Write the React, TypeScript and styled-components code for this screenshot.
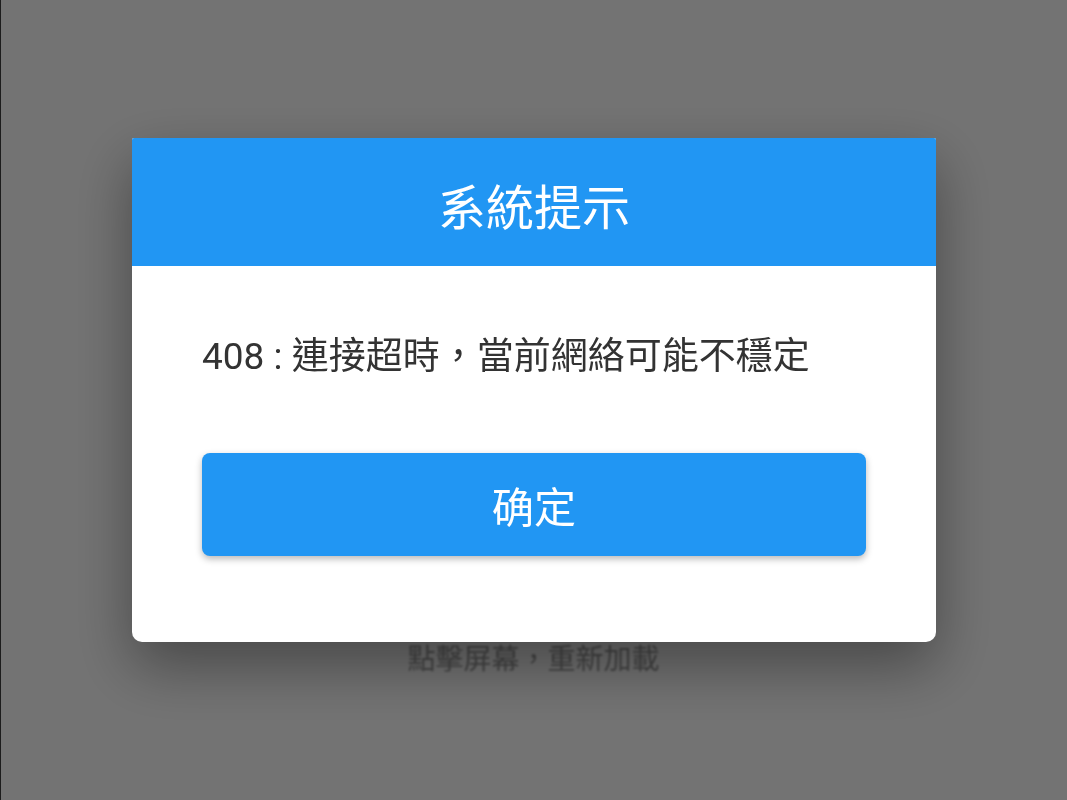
import React from 'react';
import styled, { createGlobalStyle } from 'styled-components';

const GlobalStyle = createGlobalStyle`
  html, body {
    margin: 0;
    padding: 0;
    height: 100%;
    background: #ffffff;
    font-family: Roboto, "Noto Sans CJK TC", "Noto Sans", sans-serif;
  }
  #root {
    height: 100%;
  }
`;

const Page = styled.div`
  height: 800px;
  display: flex;
  flex-direction: column;
  align-items: center;
  padding-top: 642px;
  box-sizing: border-box;
  background: #ffffff;
`;

const ReloadHint = styled.div`
  font-size: 28px;
  line-height: 36px;
  color: #999999;
  filter: blur(1px);
`;

const Overlay = styled.div`
  position: fixed;
  inset: 0;
  background: rgba(0, 0, 0, 0.55);
  border-left: 1px solid #1c1c1c;
  display: flex;
  justify-content: center;
  align-items: flex-start;
  padding-top: 138px;
  box-sizing: border-box;
`;

const Dialog = styled.div`
  width: 804px;
  background: #ffffff;
  border-radius: 2px 2px 10px 10px;
  overflow: hidden;
  box-shadow: 0 24px 60px rgba(0, 0, 0, 0.38);
`;

const Header = styled.div`
  height: 128px;
  background: #2196f3;
  color: #ffffff;
  display: flex;
  align-items: center;
  justify-content: center;
  font-size: 48px;
  padding-top: 4px;
  box-sizing: border-box;
`;

const Body = styled.div`
  padding: 66px 70px 86px;
  display: flex;
  flex-direction: column;
  gap: 71px;
`;

const Message = styled.div`
  font-size: 37px;
  line-height: 50px;
  color: #333333;
  white-space: nowrap;
`;

const ConfirmButton = styled.button`
  height: 103px;
  border: none;
  border-radius: 8px;
  background: #2196f3;
  color: #ffffff;
  font-family: inherit;
  font-size: 42px;
  box-shadow: 0 3px 7px rgba(0, 0, 0, 0.28);
  cursor: pointer;
`;

const App: React.FC = () => {
  return (
    <>
      <GlobalStyle />
      <Page>
        <ReloadHint>點擊屏幕，重新加載</ReloadHint>
      </Page>
      <Overlay>
        <Dialog>
          <Header>系統提示</Header>
          <Body>
            <Message>408 : 連接超時，當前網絡可能不穩定</Message>
            <ConfirmButton>确定</ConfirmButton>
          </Body>
        </Dialog>
      </Overlay>
    </>
  );
};

export default App;
